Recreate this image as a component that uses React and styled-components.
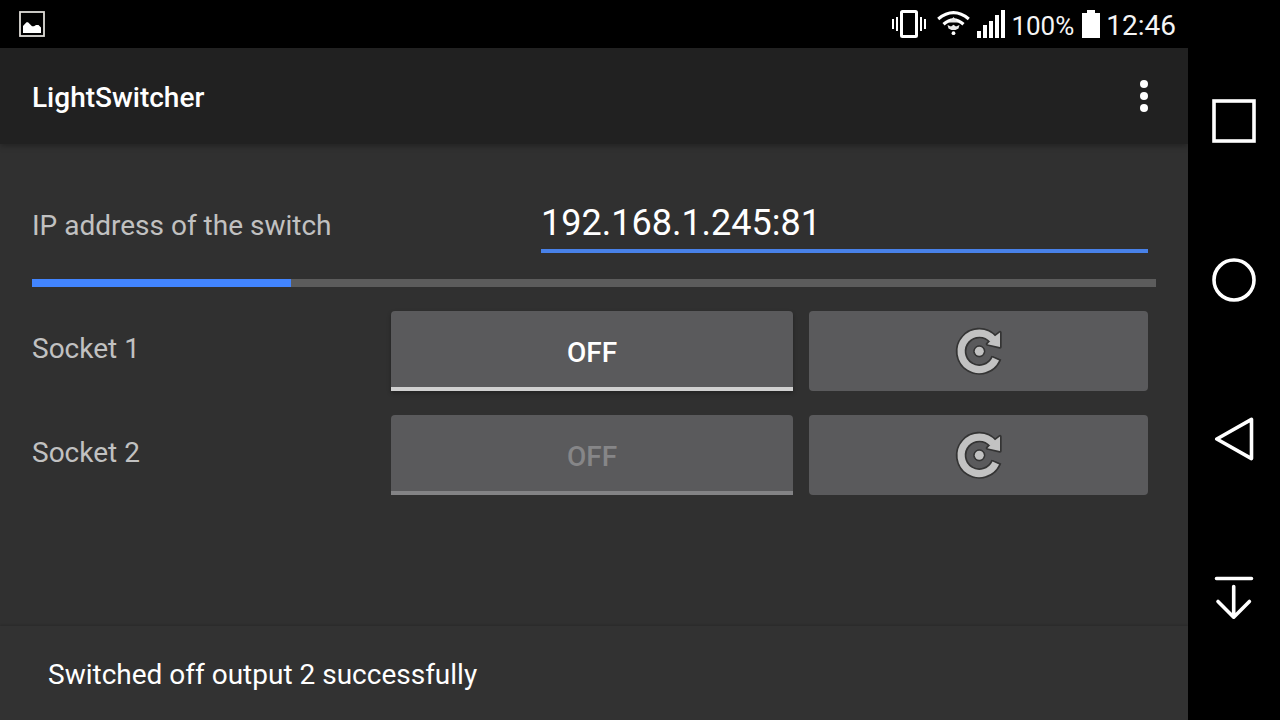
import React, { useState } from "react";
import styled, { createGlobalStyle } from "styled-components";

const GlobalStyle = createGlobalStyle`
  *, *::before, *::after { box-sizing: border-box; }
  body {
    margin: 0;
    background: #000;
    color: #fff;
    font-family: Roboto, "Liberation Sans", sans-serif;
    font-size: 28px;
    line-height: 32px;
  }
  svg { display: block; flex: none; }
`;

const Screen = styled.div`
  display: flex;
  min-height: 100vh;
`;

const Main = styled.div`
  flex: 1;
  min-width: 0;
  display: flex;
  flex-direction: column;
  background: #303030;
`;

const StatusBar = styled.div`
  display: flex;
  align-items: center;
  justify-content: space-between;
  height: 48px;
  padding: 0 12px 0 19px;
  background: #000;
`;

const StatusGroup = styled.div`
  display: flex;
  align-items: center;
  gap: 6px;
`;

const StatusText = styled.span`
  padding-top: 4px;
  font-size: ${(p) => (p.$large ? 28 : 26)}px;
  color: #f4f4f4;
`;

const AppBar = styled.header`
  display: flex;
  align-items: center;
  justify-content: space-between;
  height: 96px;
  padding: 0 24px 0 32px;
  background: #212121;
  box-shadow: 0 2px 6px rgba(0, 0, 0, 0.3);
`;

const Title = styled.h1`
  margin: 0;
  padding-top: 4px;
  font-size: 28px;
  font-weight: 500;
`;

const IconButton = styled.button`
  display: flex;
  align-items: center;
  justify-content: center;
  width: 40px;
  height: 64px;
  padding: 0;
  border: 0;
  background: none;
`;

const Content = styled.main`
  flex: 1;
  display: flex;
  flex-direction: column;
  gap: 24px;
  padding: 48px 32px 32px;
`;

const AddressRow = styled.div`
  display: grid;
  grid-template-columns: 509fr 607fr;
  align-items: center;
  padding-right: 8px;
`;

const Label = styled.label`
  color: #c1c1c1;
  padding: ${(p) => (p.$raised ? "0 0 4px" : "6px 0 0")};
`;

const AddressInput = styled.input`
  width: 100%;
  height: 61px;
  padding: 4px 0 0;
  border: 0;
  border-bottom: 4px solid #4881e8;
  outline: 0;
  background: transparent;
  color: #fff;
  font: 36px Roboto, "Liberation Sans", sans-serif;
`;

const Progress = styled.progress`
  appearance: none;
  display: block;
  width: 100%;
  height: 8px;
  margin-top: 2px;
  border: 0;
  background: #5c5c5c;

  &::-webkit-progress-bar { background: #5c5c5c; }
  &::-webkit-progress-value { background: #4285ff; }
`;

const SocketRow = styled.div`
  display: grid;
  grid-template-columns: 359fr 402fr 16px 339fr;
  align-items: center;
  padding-right: 8px;
`;

const ToggleButton = styled.button`
  height: 80px;
  padding: 6px 0 0;
  border: 0;
  border-bottom: 4px solid #d0d0d0;
  border-radius: 4px 4px 0 0;
  background: #5a5a5c;
  box-shadow: 0 2px 4px rgba(0, 0, 0, 0.3);
  color: #fff;
  font: 500 28px Roboto, "Liberation Sans", sans-serif;

  &:disabled {
    border-bottom-color: #838385;
    box-shadow: none;
    color: #868688;
  }
`;

const RestartButton = styled.button`
  grid-column: 4;
  display: flex;
  align-items: center;
  justify-content: center;
  height: 80px;
  padding: 0;
  border: 0;
  border-radius: 4px;
  background: #5a5a5c;
`;

const Snackbar = styled.div`
  display: flex;
  align-items: center;
  min-height: 94px;
  padding: 4px 48px 0;
  background: #323232;
  box-shadow: 0 -1px 2px rgba(0, 0, 0, 0.15);
`;

const NavBar = styled.nav`
  display: flex;
  flex-direction: column;
  width: 92px;
  padding: 42px 0;
  background: #000;
`;

const NavButton = styled.button`
  flex: 1;
  display: flex;
  align-items: center;
  justify-content: center;
  padding: 0;
  border: 0;
  background: none;
`;

const PhotoIcon = () => (
  <svg width="26" height="26" viewBox="0 0 26 26">
    <rect x="1" y="1" width="24" height="24" fill="none" stroke="#dedcd8" strokeWidth="1.8" />
    <path d="M4 22V15L7.5 11.2H9L13 15.3H15L17 14H19.5L22 16.5V22Z" fill="#fff" />
  </svg>
);

const VibrateIcon = () => (
  <svg width="39" height="28" viewBox="0 0 39 28" fill="#fff">
    <rect x="9.5" y="1.5" width="15" height="25" rx="1" fill="none" stroke="#fff" strokeWidth="3" />
    <path d="M0 9h2v10H0zM4 7h2v14H4zM28 7h2v14h-2zM32 9h2v10h-2z" />
  </svg>
);

const WifiIcon = () => (
  <svg width="34" height="28" viewBox="0 0 34 28">
    <g fill="none" stroke="#fff" strokeWidth="3.2">
      <path d="M1.2 9Q16.5-3.6 31.8 9" />
      <path d="M6.5 14.2Q16.5 5.4 26.5 14.2" />
    </g>
    <path d="M16.5 7L21 12.5H12ZM10.5 15L14 16.5L16.5 14.8L19 16.5L22.5 15L21.5 18.5L18.5 20H14.5L11.5 18.5Z" fill="#e8e8e8" />
    <circle cx="16.5" cy="23.2" r="1.9" fill="#fff" />
  </svg>
);

const SignalIcon = () => (
  <svg width="28" height="28" viewBox="0 0 28 28" fill="#fff">
    <path d="M0 21h4v7H0zM6 15h4v13H6zM12 11h4v17h-4zM18 5h4v23h-4zM24 0h4v28h-4z" />
  </svg>
);

const BatteryIcon = () => (
  <svg width="20" height="28" viewBox="0 0 20 28" fill="#fff">
    <path d="M7 0h8v3h5v25H2V3h5z" />
  </svg>
);

const MoreIcon = () => (
  <svg width="8" height="32" viewBox="0 0 8 32" fill="#fff">
    <circle cx="4" cy="4" r="4" />
    <circle cx="4" cy="16" r="4" />
    <circle cx="4" cy="28" r="4" />
  </svg>
);

const RestartIcon = () => (
  <svg width="48" height="48" viewBox="0 0 48 48">
    <g fill="#343434" stroke="#343434" strokeLinejoin="round">
      <path d="M37 11.2A18.2 18.2 0 1 0 41.4 30.6" fill="none" strokeWidth="10.6" />
      <path d="M37.6 30.5L44 33.5" strokeWidth="3" strokeLinecap="round" />
      <path d="M45 5.5V20L32.4 17.2L35 14.4L40.4 9Z" strokeWidth="3.4" />
      <circle cx="24.3" cy="24.3" r="5.6" strokeWidth="1" />
    </g>
    <g fill="#c2c2c2">
      <path d="M38.2 12.5A18.2 18.2 0 1 0 40.8 32" fill="none" stroke="#c2c2c2" strokeWidth="7.2" />
      <path d="M45 5.5V20L32.4 17.2L35 14.4L40.4 9Z" />
      <circle cx="24.3" cy="24.3" r="4.5" />
    </g>
  </svg>
);

const NavIcon = ({ children }) => (
  <svg
    width="46"
    height="45"
    viewBox="0 0 46 45"
    fill="none"
    stroke="#fff"
    strokeWidth="3.6"
    strokeLinecap="round"
    strokeLinejoin="round"
  >
    {children}
  </svg>
);

const navItems = [
  { name: "Recent apps", shape: <rect x="3" y="2" width="40" height="40" strokeLinejoin="miter" /> },
  { name: "Home", shape: <circle cx="23" cy="22" r="20" /> },
  { name: "Back", shape: <path d="M5.8 22L40.5 2.4V41.6Z" /> },
  { name: "Notifications", shape: <path d="M5.5 2.5H40.5M22.7 10.5V41M7 25.5L22.7 41.2L38.4 25.5" /> },
];

function SocketControl({ number, disabled }) {
  const id = `socket-${number}`;
  return (
    <SocketRow>
      <Label htmlFor={id} $raised>Socket {number}</Label>
      <ToggleButton id={id} type="button" disabled={disabled}>OFF</ToggleButton>
      <RestartButton type="button" aria-label={`Restart socket ${number}`}>
        <RestartIcon />
      </RestartButton>
    </SocketRow>
  );
}

export default function App() {
  const [address, setAddress] = useState("192.168.1.245:81");
  return (
    <>
      <GlobalStyle />
      <Screen>
        <Main>
          <StatusBar>
            <PhotoIcon />
            <StatusGroup>
              <VibrateIcon />
              <WifiIcon />
              <SignalIcon />
              <StatusText>100%</StatusText>
              <BatteryIcon />
              <StatusText $large>12:46</StatusText>
            </StatusGroup>
          </StatusBar>
          <AppBar>
            <Title>LightSwitcher</Title>
            <IconButton type="button" aria-label="More options">
              <MoreIcon />
            </IconButton>
          </AppBar>
          <Content>
            <AddressRow>
              <Label htmlFor="address">IP address of the switch</Label>
              <AddressInput
                id="address"
                type="text"
                value={address}
                onChange={(event) => setAddress(event.target.value)}
              />
            </AddressRow>
            <Progress value={23} max={100} aria-label="Switching progress" />
            <SocketControl number={1} />
            <SocketControl number={2} disabled />
          </Content>
          <Snackbar role="status">Switched off output 2 successfully</Snackbar>
        </Main>
        <NavBar>
          {navItems.map((item) => (
            <NavButton key={item.name} type="button" aria-label={item.name}>
              <NavIcon>{item.shape}</NavIcon>
            </NavButton>
          ))}
        </NavBar>
      </Screen>
    </>
  );
}
